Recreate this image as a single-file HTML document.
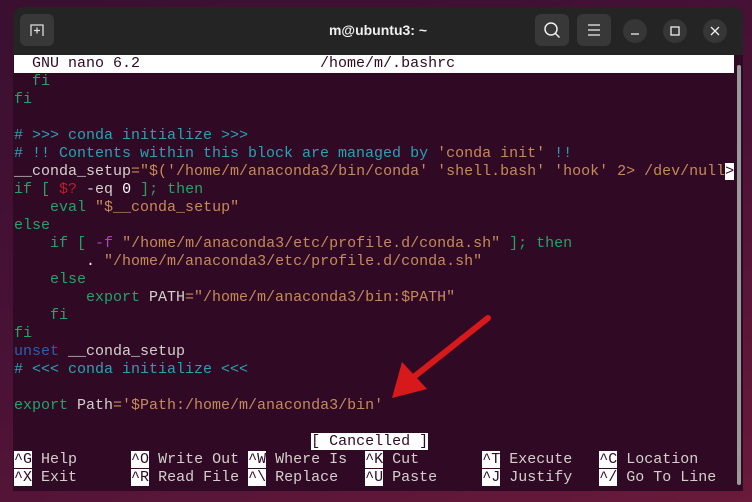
<!DOCTYPE html>
<html><head><meta charset="utf-8"><style>
html,body{margin:0;padding:0;width:752px;height:502px;overflow:hidden;background:linear-gradient(160deg,#3a0f30 0%,#4a1236 50%,#6a1a3a 100%);font-family:"Liberation Sans",sans-serif}
.win{position:absolute;left:13px;top:7px;width:730px;height:484px;background:#300a24;border-radius:10px 10px 0 0;overflow:hidden}
.tb{position:absolute;left:0;top:0;width:730px;height:48px;background:#242424}
.btn{position:absolute;top:7px;width:34px;height:32px;background:#383838;border-radius:6px}
.cb{position:absolute;top:12px;width:24px;height:24px;background:#363636;border-radius:50%}
.title{position:absolute;left:0;width:730px;top:15px;text-align:center;color:#f0f0f0;font-weight:bold;font-size:14px}
.t{position:absolute;left:1px;top:48px;font-family:"Liberation Mono",monospace;font-size:15px;line-height:18px;color:#d3d0cc}
.r{height:18px;white-space:pre}
.g{color:#26a269}.c{color:#2aa1b3}.o{color:#c58a5a}.rd{color:#c01c28}.p{color:#a347ba}.b{color:#2a5fb0}.w{color:#ffffff}
.inv{background:#fff;color:#300a24}
.sb{position:absolute;right:2px;top:58px;width:4px;height:420px;background:#9a9a9a;border-radius:2px}
</style></head><body>
<div class="win">
<div class="tb">
<div class="btn" style="left:7px"><svg width="34" height="32"><path d="M11 22 V11 H23 V22 M17 13.5v6 M14 16.5h6" stroke="#ddd" stroke-width="1.3" fill="none"/></svg></div>
<div class="title">m@ubuntu3: ~</div>
<div class="btn" style="left:522px"><svg width="34" height="32"><circle cx="16" cy="15" r="6" stroke="#eee" stroke-width="1.5" fill="none"/><path d="M20.5 19.5l4 4" stroke="#eee" stroke-width="1.5"/></svg></div>
<div class="btn" style="left:564px"><svg width="34" height="32"><path d="M11 11h12M11 16h12M11 21h12" stroke="#eee" stroke-width="1.3"/></svg></div>
<div class="cb" style="left:610px"><svg width="24" height="24"><path d="M8 15h8" stroke="#eee" stroke-width="1.3"/></svg></div>
<div class="cb" style="left:650px"><svg width="24" height="24"><rect x="8" y="8" width="8" height="8" stroke="#eee" stroke-width="1.3" fill="none"/></svg></div>
<div class="cb" style="left:690px"><svg width="24" height="24"><path d="M8 8l8 8M16 8l-8 8" stroke="#eee" stroke-width="1.3"/></svg></div>
</div>
<div class="t"><div class="r" style="background:#fff;color:#300a24;width:720px">  GNU nano 6.2                    /home/m/.bashrc</div><div class="r g">  fi</div><div class="r g">fi</div><div class="r"> </div><div class="r c"># &gt;&gt;&gt; conda initialize &gt;&gt;&gt;</div><div class="r c"># !! Contents within this block are managed by <span class="o">'conda init'</span> !!</div><div class="r">__conda_setup<span class="o">="$('/home/m/anaconda3/bin/conda' 'shell.bash' 'hook' 2&gt; /dev/null</span><span class="inv">&gt;</span></div><div class="r"><span class="g">if [</span> <span class="rd">$?</span> -eq <span class="w">0</span> <span class="g">]; then</span></div><div class="r">    <span class="g">eval</span> <span class="o">"$__conda_setup"</span></div><div class="r g">else</div><div class="r">    <span class="g">if [</span> <span class="p">-f</span> <span class="o">"/home/m/anaconda3/etc/profile.d/conda.sh"</span> <span class="g">]; then</span></div><div class="r">        <span class="w">.</span> <span class="o">"/home/m/anaconda3/etc/profile.d/conda.sh"</span></div><div class="r g">    else</div><div class="r">        <span class="g">export</span> PATH<span class="o">="/home/m/anaconda3/bin:$PATH"</span></div><div class="r g">    fi</div><div class="r g">fi</div><div class="r"><span class="b">unset</span> __conda_setup</div><div class="r c"># &lt;&lt;&lt; conda initialize &lt;&lt;&lt;</div><div class="r"> </div><div class="r"><span class="g">export</span> Path<span class="o">='$Path:/home/m/anaconda3/bin'</span></div><div class="r"> </div><div class="r">                                 <span class="inv">[ Cancelled ]</span></div><div class="r"><span class="inv">^G</span> Help      <span class="inv">^O</span> Write Out <span class="inv">^W</span> Where Is  <span class="inv">^K</span> Cut       <span class="inv">^T</span> Execute   <span class="inv">^C</span> Location</div><div class="r"><span class="inv">^X</span> Exit      <span class="inv">^R</span> Read File <span class="inv">^\</span> Replace   <span class="inv">^U</span> Paste     <span class="inv">^J</span> Justify   <span class="inv">^/</span> Go To Line</div></div>
<div class="sb"></div>
</div>
<svg style="position:absolute;left:0;top:0" width="752" height="502"><path d="M488 318 L410 380" stroke="#d8191b" stroke-width="6" stroke-linecap="round"/><path d="M392 398 L402 362 L427 389 Z" fill="#d8191b"/></svg>
</body></html>
